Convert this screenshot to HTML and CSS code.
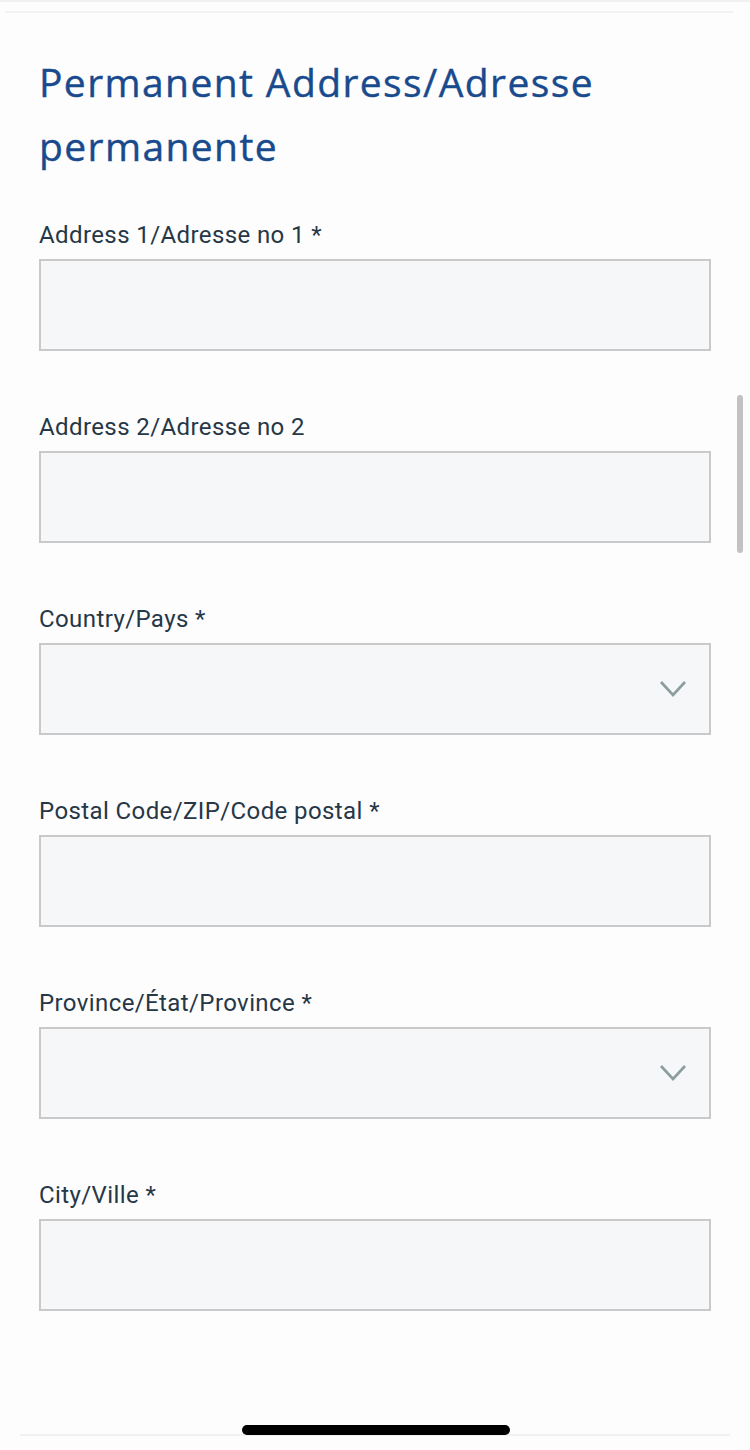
FILE: index.html
```html
<!DOCTYPE html>
<html lang="en">
<head>
<meta charset="utf-8">
<title>Permanent Address</title>
<link rel="stylesheet" href="styles.css">
</head>
<body>
<div class="page">
  <div class="topbar"></div>
  <div class="topline"></div>
  <main class="content">
    <h1 class="title">Permanent Address/Adresse permanente</h1>
    <div class="fields">
      <div class="field">
        <label class="label">Address 1/Adresse no 1 *</label>
        <div class="box"></div>
      </div>
      <div class="field">
        <label class="label">Address 2/Adresse no 2</label>
        <div class="box"></div>
      </div>
      <div class="field">
        <label class="label">Country/Pays *</label>
        <div class="box select">
          <svg class="chev" width="28" height="18" viewBox="0 0 28 18"><path d="M2 2 L14 15 L26 2" fill="none" stroke="#8c9d9d" stroke-width="2.6"/></svg>
        </div>
      </div>
      <div class="field">
        <label class="label">Postal Code/ZIP/Code postal *</label>
        <div class="box"></div>
      </div>
      <div class="field">
        <label class="label">Province/État/Province *</label>
        <div class="box select">
          <svg class="chev" width="28" height="18" viewBox="0 0 28 18"><path d="M2 2 L14 15 L26 2" fill="none" stroke="#8c9d9d" stroke-width="2.6"/></svg>
        </div>
      </div>
      <div class="field">
        <label class="label">City/Ville *</label>
        <div class="box"></div>
      </div>
    </div>
  </main>
  <div class="scrollbar"></div>
  <div class="bottomline"></div>
  <div class="home"></div>
</div>
</body>
</html>
```
FILE: styles.css
```css
html, body {
  margin: 0;
  padding: 0;
  background: #fdfdfd;
}
.page {
  position: relative;
  width: 750px;
  height: 1450px;
  overflow: hidden;
  background: #fdfdfd;
}
.topbar {
  height: 2px;
  background: #f1f1f1;
}
.topline {
  height: 2px;
  margin: 9px 17px 0 5px;
  background: #f3f3f3;
}
.content {
  padding: 0 39px;
}
.title {
  margin: 37px 0 0 0;
  font-family: "Open Sans", sans-serif;
  font-weight: 500;
  font-size: 39px;
  line-height: 64px;
  color: #184a8d;
  letter-spacing: 1.4px;
  -webkit-text-stroke: 0.4px #184a8d;
}
.fields {
  display: flex;
  flex-direction: column;
  gap: 63px;
  margin-top: 44px;
}
.field {
  display: flex;
  flex-direction: column;
  gap: 10px;
}
.label {
  font-family: Roboto, sans-serif;
  font-size: 24px;
  line-height: 27px;
  letter-spacing: 0.4px;
  color: #263747;
}
.box {
  box-sizing: border-box;
  height: 92px;
  border: 2px solid #c9c9c9;
  background: #f6f7f9;
  position: relative;
  display: flex;
  align-items: center;
  justify-content: flex-end;
}
.select {
  padding-right: 22px;
}
.chev {
  display: block;
}
.scrollbar {
  position: absolute;
  left: 737px;
  top: 395px;
  width: 6px;
  height: 158px;
  border-radius: 3px;
  background: #c2c2c2;
}
.bottomline {
  position: absolute;
  left: 20px;
  right: 20px;
  top: 1434px;
  height: 2px;
  background: #f1f1f1;
}
.home {
  position: absolute;
  left: 242px;
  top: 1425px;
  width: 268px;
  height: 10px;
  border-radius: 5px;
  background: #000;
}
```
